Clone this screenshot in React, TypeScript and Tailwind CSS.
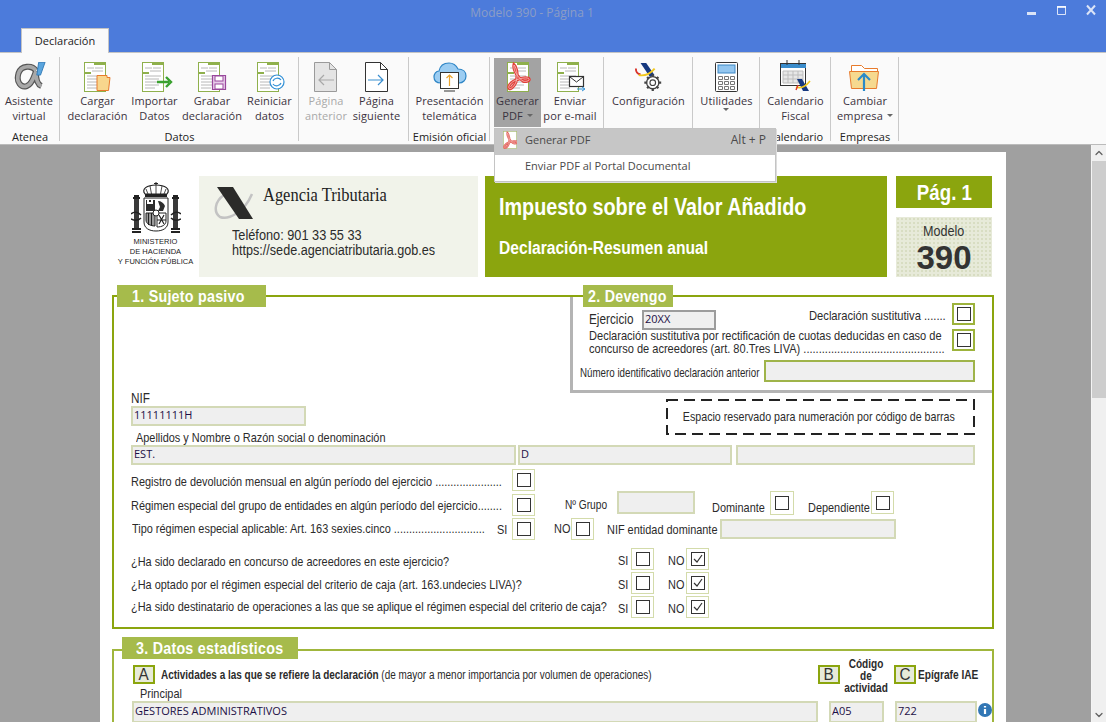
import React from 'react';
import { ChevronDown, ChevronUp } from 'lucide-react';

const ribbonFont = { fontFamily: '"Open Sans", "Noto Sans", sans-serif' };
const formFont = { fontFamily: '"Liberation Sans", Arial, sans-serif' };

// The form is set in a condensed face, so regular text gets squeezed horizontally
const N = ({
  children,
  className = 'origin-left scale-x-[0.84]',
}: {
  children: React.ReactNode;
  className?: string;
}) => <span className={`inline-block whitespace-nowrap ${className}`}>{children}</span>;

// Shared document sheet used by most of the ribbon icons
const Sheet = ({ children, w = 26 }: { children?: React.ReactNode; w?: number }) => (
  <svg width={w} height="30" viewBox={`0 0 ${w} 30`} className="block overflow-visible">
    <rect x="0.5" y="0.5" width="21" height="29" fill="#fff" stroke="#8fb04c" />
    <rect x="10" y="0" width="12" height="3" fill="#8fb04c" />
    <rect x="0" y="10" width="7" height="2" fill="#8fb04c" />
    <path d="M3 6h7M11 6h8M8 9h11M3 14h16M3 17h14M3 20h16M3 23h14M3 26h10" stroke="#b8b8b8" strokeWidth="1" />
    {children}
  </svg>
);

const AlphaIcon = () => (
  <svg width="33" height="28" viewBox="0 0 36 30" className="mb-[2px]">
    <path d="M25 9C21 3 9 3 6 12c-3 10 3 16 9 14 6-2 8-11 10-16 0 8 1 14 6 16" fill="none" stroke="#555" strokeWidth="6.5" />
    <path d="M25 9C21 3 9 3 6 12c-3 10 3 16 9 14 6-2 8-11 10-16 0 8 1 14 6 16" fill="none" stroke="#a8a8a8" strokeWidth="4" />
    <path d="M28 0h7l-5 14h-4z" fill="#5aa5de" stroke="#2f78b5" />
  </svg>
);

const PdfSwoosh = ({ color = '#e2403a' }: { color?: string }) => (
  <>
    <path
      d="M7 3c-1 5 4 13 9 16 2 1 7 0 6-2-1-2-8-1-13 1-5 2-8 6-7 8 1 2 5-1 7-6 2-5 1-14-2-17z"
      fill="none"
      stroke={color}
      strokeWidth="3.2"
    />
    <path
      d="M7 3c-1 5 4 13 9 16 2 1 7 0 6-2-1-2-8-1-13 1-5 2-8 6-7 8 1 2 5-1 7-6 2-5 1-14-2-17z"
      fill="none"
      stroke="#f8c4c0"
      strokeWidth="0.8"
    />
  </>
);

const PaperArrow = ({ disabled }: { disabled?: boolean }) => (
  <svg width="24" height="30" viewBox="0 0 24 30">
    <path
      d="M.5.5h15l7 7v22H.5z"
      fill={disabled ? '#e4e4e4' : '#fff'}
      stroke={disabled ? '#9a9a9a' : '#333'}
    />
    <path d="M15.5.5v7h7" fill="none" stroke={disabled ? '#9a9a9a' : '#333'} />
    {disabled ? (
      <path d="M20 18H5M10 13l-5 5 5 5" fill="none" stroke="#a8a8a8" strokeWidth="1.2" />
    ) : (
      <path d="M3 18h15M13 13l5 5-5 5" fill="none" stroke="#3b8fd0" strokeWidth="1.2" />
    )}
  </svg>
);

const CloudIcon = () => (
  <svg width="34" height="31" viewBox="0 0 34 31">
    <path
      d="M8 22C3 22 1 19 1 16c0-3 2-6 5-6 1-5 5-8 10-8 4 0 7 2 9 6 5 0 8 3 8 7s-3 7-7 7z"
      fill="#9ccdf2"
      stroke="#2f86c6"
      strokeWidth="1.2"
    />
    <rect x="7.5" y="11.5" width="18" height="16" fill="#fff" stroke="#333" />
    <path d="M11 30h11" stroke="#333" />
    <path d="M16.5 25V14M13.5 17l3-3 3 3" fill="none" stroke="#eba52f" strokeWidth="1.2" />
  </svg>
);

const ConfigIcon = () => (
  <svg width="32" height="30" viewBox="0 0 32 32">
    <path d="M7 1h6l9 13-5 2z" fill="#16387f" />
    <path d="M2 7c0 4 2 6 5 6" fill="none" stroke="#d9342b" strokeWidth="2" />
    <path d="M5 14c6 1 12-1 17-7" fill="none" stroke="#f2c81d" strokeWidth="2" />
    <circle cx="20" cy="22" r="6.5" fill="#fff" stroke="#444" strokeWidth="1.4" />
    <circle cx="20" cy="22" r="3" fill="#fff" stroke="#444" strokeWidth="1.2" />
    <path d="M20 13v3M20 28v3M11 22h3M26 22h3M14 16l2 2M24 26l2 2M14 28l2-2M24 18l2-2" stroke="#444" strokeWidth="2.4" />
  </svg>
);

const CalcIcon = () => (
  <svg width="24" height="30" viewBox="0 0 24 30">
    <rect x="0.5" y="0.5" width="22" height="29" rx="1" fill="#fff" stroke="#333" />
    <rect x="3" y="3" width="17" height="8" fill="#93c6ef" stroke="#3c87c4" />
    <path d="M3.5 14.5h4v3h-4zM9.5 14.5h4v3h-4zM15.5 14.5h4v3h-4zM3.5 19.5h4v3h-4zM9.5 19.5h4v3h-4zM15.5 19.5h4v3h-4zM3.5 24.5h4v3h-4zM9.5 24.5h4v3h-4zM15.5 24.5h4v3h-4z" fill="none" stroke="#777" />
  </svg>
);

const CalendarIcon = () => (
  <svg width="32" height="32" viewBox="0 0 32 32">
    <rect x="0.5" y="3.5" width="25" height="22" fill="#fff" stroke="#333" />
    <rect x="1" y="4" width="25" height="4" fill="#3a8ccb" />
    <path d="M7 0v5M19 0v5" stroke="#333" />
    <path d="M3 11h20v12H3zM3 15h20M3 19h20M8 11v12M13 11v12M18 11v12" fill="#e7e7e7" stroke="#bdbdbd" />
    <path d="M17 19h5l7 12h-6z" fill="#16387f" />
    <path d="M16 27c5 2 10-1 14-6" fill="none" stroke="#f2c81d" strokeWidth="1.6" />
    <path d="M18 25l-2 5" stroke="#d9342b" strokeWidth="1.4" />
  </svg>
);

const FolderIcon = () => (
  <svg width="32" height="28" viewBox="0 0 32 28">
    <path d="M2.5 9V1.5h10l3 3h13V9" fill="#fff" stroke="#e87b2c" />
    <path d="M.5 7.5h29l-2 17h-25z" fill="#f6d98f" stroke="#e87b2c" />
    <path d="M15 27V11M9 16l6-6 6 6" fill="none" stroke="#2b8ac8" strokeWidth="2.2" />
  </svg>
);

type RibbonItem = {
  lines: [string, string];
  icon: React.ReactNode;
  width: number;
  arrow?: boolean;
  muted?: boolean;
  active?: boolean;
};

const Caret = () => (
  <span className="inline-block h-0 w-0 border-x-[3px] border-t-[3px] border-x-transparent border-t-[#666] align-middle" />
);

const RibbonButton = ({ item }: { item: RibbonItem }) => (
  <div
    className={`flex h-[69px] shrink-0 flex-col items-center ${item.active ? 'bg-[#a3a3a3]' : ''}`}
    style={{ width: item.width }}
  >
    <div className="flex h-[34px] items-end">{item.icon}</div>
    <div
      className={`mt-[1px] text-center text-[11px] leading-[15px] whitespace-nowrap tracking-[0.1px] ${
        item.muted ? 'text-[#a9a9a9]' : 'text-[#3a3340]'
      }`}
    >
      <div>{item.lines[0]}</div>
      <div className="flex items-center justify-center gap-1">
        {item.lines[1] && <span>{item.lines[1]}</span>}
        {!item.lines[1] && !item.arrow && '\u00a0'}
        {item.arrow && <Caret />}
      </div>
    </div>
  </div>
);

const RibbonGroup = ({
  label,
  width,
  items,
  padLeft = 0,
}: {
  label?: string;
  width: number;
  items: RibbonItem[];
  padLeft?: number;
}) => (
  <div className="relative flex shrink-0 flex-col pt-[5px]" style={{ width }}>
    <div className="flex" style={{ paddingLeft: padLeft }}>
      {items.map((it) => (
        <RibbonButton key={it.lines.join()} item={it} />
      ))}
    </div>
    <div className="mt-[2px] text-center text-[11px] leading-[15px] whitespace-nowrap text-[#222]">{label}</div>
    <span className="absolute top-[4px] right-0 h-[84px] w-[1px] bg-[#c9c9c9]" />
  </div>
);

const Ribbon = () => (
  <div className="flex h-[93px] border-t border-b border-t-[#c4c4c4] border-b-[#bbbbbb] bg-[#fafafa]" style={ribbonFont}>
    <RibbonGroup
      label="Atenea"
      width={60}
      padLeft={3}
      items={[{ lines: ['Asistente', 'virtual'], width: 52, icon: <AlphaIcon /> }]}
    />
    <RibbonGroup
      label="Datos"
      width={239}
      padLeft={9}
      items={[
        {
          lines: ['Cargar', 'declaración'],
          width: 57,
          icon: (
            <Sheet w={28}>
              <path d="M13 13.5h10v2h3l-1.5 13h-11.5z" fill="#f8d68d" stroke="#e87b2c" />
            </Sheet>
          ),
        },
        {
          lines: ['Importar', 'Datos'],
          width: 57,
          icon: (
            <Sheet>
              <path d="M15 20h12M24 15l5 5-5 5" fill="none" stroke="#3aa12f" strokeWidth="2.4" />
            </Sheet>
          ),
        },
        {
          lines: ['Grabar', 'declaración'],
          width: 58,
          icon: (
            <Sheet w={28}>
              <path d="M14.5 13.5h13v14h-13z" fill="#e8cdea" stroke="#99489c" strokeWidth="1.2" />
              <rect x="17" y="14" width="8" height="5" fill="#fff" stroke="#99489c" />
              <rect x="17" y="22" width="8" height="5" fill="#fff" stroke="#99489c" />
            </Sheet>
          ),
        },
        {
          lines: ['Reiniciar', 'datos'],
          width: 57,
          icon: (
            <Sheet>
              <circle cx="20" cy="20" r="7" fill="#fff" stroke="#2f8fd6" strokeWidth="1.2" />
              <path d="M16 19c1-3 6-4 8-1M24 21c-1 3-6 4-8 1" fill="none" stroke="#2f8fd6" strokeWidth="1.2" />
            </Sheet>
          ),
        },
      ]}
    />
    <RibbonGroup
      width={110}
      items={[
        { lines: ['Página', 'anterior'], width: 54, muted: true, icon: <PaperArrow disabled /> },
        { lines: ['Página', 'siguiente'], width: 47, icon: <PaperArrow /> },
      ]}
    />
    <RibbonGroup
      label="Emisión oficial"
      width={81}
      items={[{ lines: ['Presentación', 'telemática'], width: 81, icon: <CloudIcon /> }]}
    />
    <RibbonGroup
      width={114}
      padLeft={4}
      items={[
        {
          lines: ['Generar', 'PDF'],
          width: 47,
          arrow: true,
          active: true,
          icon: (
            <Sheet w={22}>
              <PdfSwoosh />
            </Sheet>
          ),
        },
        {
          lines: ['Enviar', 'por e-mail'],
          width: 58,
          icon: (
            <Sheet>
              <rect x="12.5" y="14.5" width="14" height="10" fill="#fff" stroke="#333" strokeWidth="1.2" />
              <path d="M13 15l6.5 5 6.5-5" fill="none" stroke="#333" />
              <path d="M20 27h7M25 25l3 2-3 2" fill="none" stroke="#2f8fd6" />
            </Sheet>
          ),
        },
      ]}
    />
    <RibbonGroup
      width={89}
      padLeft={1}
      items={[{ lines: ['Configuración', ''], width: 87, icon: <ConfigIcon /> }]}
    />
    <RibbonGroup
      width={67}
      items={[{ lines: ['Utilidades', ''], width: 67, arrow: true, icon: <CalcIcon /> }]}
    />
    <RibbonGroup
      label="Calendario"
      width={71}
      items={[{ lines: ['Calendario', 'Fiscal'], width: 71, icon: <CalendarIcon /> }]}
    />
    <RibbonGroup
      label="Empresas"
      width={68}
      items={[{ lines: ['Cambiar', 'empresa'], width: 68, arrow: true, icon: <FolderIcon /> }]}
    />
  </div>
);

const PdfMenu = () => (
  <div
    className="absolute top-[128px] left-[494px] z-20 w-[282px] border border-[#c4c4c4] bg-white text-[11px] text-[#4a4a4a] shadow-[1px_1px_0_#ddd]"
    style={ribbonFont}
  >
    <div className="flex h-[26px] items-center bg-[#c6c6c6] pr-[9px] pb-[4px]">
      <svg width="14" height="18" viewBox="0 0 22 28" className="ml-[8px]">
        <rect x="0.5" y="0.5" width="21" height="27" fill="#fff" stroke="#a9bf72" />
        <PdfSwoosh color="#e2605a" />
      </svg>
      <span className="ml-[8px]">Generar PDF</span>
      <span className="ml-auto text-[12px]">Alt + P</span>
    </div>
    <div className="flex h-[26px] items-center pb-[4px] pl-[30px]">Enviar PDF al Portal Documental</div>
  </div>
);

const Check = ({
  checked,
  strong,
  size = 'h-[22px] w-[23px]',
}: {
  checked?: boolean;
  strong?: boolean;
  size?: string;
}) => (
  <span
    className={`flex shrink-0 items-center justify-center bg-white ${
      strong ? 'border-2 border-[#9db33c]' : 'border border-[#d3dbaa]'
    } ${size}`}
  >
    <span className="flex h-[14px] w-[14px] items-center justify-center border border-[#333]">
      {checked && (
        <svg width="12" height="12" viewBox="0 0 12 12">
          <path d="M2 6l3 3 5-7" fill="none" stroke="#333" strokeWidth="1.2" />
        </svg>
      )}
    </span>
  </span>
);

const Field = ({ value, className }: { value?: string; className: string }) => (
  <div
    className={`flex shrink-0 items-center border-2 bg-[#efefef] pb-[1px] pl-[1px] text-[11px] text-[#1c0f45] ${className}`}
    style={ribbonFont}
  >
    {value}
  </div>
);

const SectionTab = ({ title, className }: { title: string; className: string }) => (
  <div
    className={`absolute flex h-[22px] items-center bg-[#a6bb4b] text-[17px] leading-none font-bold tracking-[0.3px] text-white ${className}`}
  >
    <N>{title}</N>
  </div>
);

const Crest = () => (
  <svg width="50" height="54" viewBox="0 0 50 54" className="block">
    {/* crown */}
    <path d="M25 0v3M23 1.5h4" stroke="#222" />
    <path d="M14 12c-4-5 2-9 11-9s15 4 11 9z" fill="#fff" stroke="#222" strokeWidth="1.2" />
    <path d="M25 3v9M19 4l1.5 8M31 4l-1.5 8M15 7l2 5M35 7l-2 5" stroke="#222" strokeWidth="0.8" />
    <rect x="14" y="12" width="22" height="3" fill="#222" />
    {/* shield */}
    <path d="M13 16h24v24c0 6-5 9-12 9s-12-3-12-9z" fill="#fff" stroke="#222" />
    <rect x="15" y="18" width="9" height="11" fill="#2d2d2d" />
    <path d="M16 18h2v2h2v-2h2v4h-6z" fill="#fff" />
    <path d="M27 19c3 0 6 2 7 5l-2 5h-5l2-4z" fill="#2d2d2d" />
    <path d="M15 31h9v13c-4 0-9-2-9-6zM17.5 31v12M20.5 31v13" fill="#999" stroke="#222" strokeWidth="1" />
    <path d="M26 31h9v8c0 4-4 6-9 6z" fill="#fff" stroke="#222" strokeWidth="1" />
    <path d="M28 33l5 9M33 33l-5 9M26 38h9" stroke="#222" strokeWidth="1.2" />
    <circle cx="25" cy="31" r="3" fill="#fff" stroke="#222" />
    {/* pillars of Hercules */}
    <rect x="3" y="17" width="5" height="29" fill="#3a3a3a" />
    <rect x="42" y="17" width="5" height="29" fill="#3a3a3a" />
    <path d="M2 16h7M41 16h7M1 47h9M40 47h9M1 50h9M40 50h9" stroke="#222" strokeWidth="2" />
    <path d="M3 13h5v2H3zM42 13h5v2h-5z" fill="#222" />
    <path d="M0 32c3-3 7-2 10 1M0 37c4 2 7 2 10-1M50 32c-3-3-7-2-10 1M50 37c-4 2-7 2-10-1" fill="none" stroke="#222" strokeWidth="1.5" />
  </svg>
);

const AeatLogo = () => (
  <svg width="42" height="36" viewBox="0 0 42 36" className="block shrink-0">
    <path d="M12 11C3 17 1 28 8 33c8 3 24-4 32-23" fill="none" stroke="#c3c3c3" strokeWidth="2.5" />
    <path d="M5 3h16l20 32H27z" fill="#2b2b29" />
  </svg>
);

const Header = () => (
  <div className="flex h-[101px]">
    <div className="flex w-[87px] shrink-0 flex-col items-center pt-[6px]">
      <Crest />
      <div className="mt-[1px] text-center text-[7.5px] leading-[10px] whitespace-nowrap text-[#222]">
        <div>MINISTERIO</div>
        <div>DE HACIENDA</div>
        <div>Y FUNCIÓN PÚBLICA</div>
      </div>
    </div>
    <div className="w-[279px] shrink-0 bg-[#f1f3ea] pt-[8px] pl-[13px]">
      <div className="flex">
        <AeatLogo />
        <span
          className="mt-[-1px] ml-[9px] origin-left scale-x-[0.89] text-[18.5px] leading-[24px] whitespace-nowrap text-[#222]"
          style={{ fontFamily: '"Liberation Serif", serif' }}
        >
          Agencia Tributaria
        </span>
      </div>
      <div className="mt-[8px] ml-[20px] text-[14px] leading-[15px] text-[#2b2b2b]">
        <div>
          <N className="origin-left scale-x-[0.91]">Teléfono: 901 33 55 33</N>
        </div>
        <div>
          <N className="origin-left scale-x-[0.9]">https://sede.agenciatributaria.gob.es</N>
        </div>
      </div>
    </div>
    <div className="ml-[7px] w-[402px] shrink-0 bg-[#8ba50e] pt-[17px] pl-[14px] font-bold text-white">
      <div className="text-[24px] leading-[28px]">
        <N className="origin-left scale-x-[0.825]">Impuesto sobre el Valor Añadido</N>
      </div>
      <div className="mt-[16px] text-[18px] leading-[22px]">
        <N className="origin-left scale-x-[0.867]">Declaración-Resumen anual</N>
      </div>
    </div>
    <div className="ml-[9px] flex w-[96px] shrink-0 flex-col">
      <div className="flex h-[32px] items-center justify-center bg-[#8ba50e] text-[22px] font-bold text-white">
        <N className="origin-center scale-x-[0.85]">Pág. 1</N>
      </div>
      <div className="mt-[9px] flex h-[60px] flex-col items-center bg-[#e7ead9] bg-[radial-gradient(#d8ddc2_1px,transparent_1px)] bg-[length:4px_4px] pt-[5px] text-[#333]">
        <N className="origin-center scale-x-[0.84] text-[15px] leading-[18px]">Modelo</N>
        <span className="mt-[2px] text-[33px] leading-[32px] font-bold">390</span>
      </div>
    </div>
  </div>
);

const Devengo = () => (
  <div className="relative ml-auto h-[96px] w-[422px] border-b-[3px] border-l-[3px] border-[#b4b4b4] bg-white pt-[6px] pr-[17px] text-[13px] text-[#2b2b2b]">
    <SectionTab title="2. Devengo" className="top-[-12px] left-[10px] w-[90px] pl-[5px]" />
    <div className="flex h-[26px] items-start">
      <span className="mt-[7px] ml-[16px] w-[53px] text-[14px] leading-[18px]">
        <N>Ejercicio</N>
      </span>
      <Field value="20XX" className="mt-[7px] h-[20px] w-[74px] border border-[#9c9c9c]" />
      <span className="mt-[4px] ml-auto w-[137px] leading-[18px]">
        <N className="origin-left scale-x-[0.86]">Declaración sustitutiva .......</N>
      </span>
      <span className="ml-[6px]">
        <Check strong />
      </span>
    </div>
    <div className="flex h-[24px] items-start">
      <div className="ml-[16px] w-[340px] text-[13px] leading-[13px]">
        <div>
          <N className="origin-left scale-x-[0.85]">Declaración sustitutiva por rectificación de cuotas deducidas en caso de</N>
        </div>
        <div>
          <N className="origin-left scale-x-[0.85]">concurso de acreedores (art. 80.Tres LIVA) ..............................................</N>
        </div>
      </div>
      <span className="ml-auto">
        <Check strong />
      </span>
    </div>
    <div className="mt-[7px] flex h-[22px] items-center">
      <span className="mt-[4px] ml-[7px] w-[184px] shrink-0">
        <N className="origin-left scale-x-[0.75]">Número identificativo declaración anterior</N>
      </span>
      <Field className="h-[22px] grow border-[#9fb44a]" />
    </div>
  </div>
);

const BarcodeBox = () => (
  <div className="relative mt-[6px] ml-[360px] flex h-[36px] w-[309px] items-center justify-center pr-[3px] text-[13px]">
    <svg width="309" height="36" className="absolute inset-0">
      <rect x="1" y="1" width="307" height="34" fill="none" stroke="#222" strokeWidth="2" strokeDasharray="11 6" />
    </svg>
    <N className="origin-center scale-x-[0.82]">Espacio reservado para numeración por código de barras</N>
  </div>
);

const Sujeto = () => {
  const softField = 'border-[#d3d9b6]';
  const questions = [
    { text: '¿Ha sido declarado en concurso de acreedores en este ejercicio?', offset: 'mt-[6px]' },
    { text: '¿Ha optado por el régimen especial del criterio de caja (art. 163.undecies LIVA)?', offset: 'mt-[4px]' },
    {
      text: '¿Ha sido destinatario de operaciones a las que se aplique el régimen especial del criterio de caja?',
      offset: 'mt-0',
    },
  ];

  return (
    <section className="relative mt-[18px] h-[334px] border-2 border-[#8ba50e] text-[13px] text-[#2b2b2b]">
      <SectionTab title="1. Sujeto pasivo" className="top-[-12px] left-[3px] w-[149px] pl-[15px]" />
      <Devengo />
      <div className="flex h-[52px]">
        <div className="ml-[17px] w-[175px] shrink-0">
          <div className="mt-[-2px] h-[15px] text-[14px] leading-[14px]">
            <N>NIF</N>
          </div>
          <Field value="11111111H" className={`h-[20px] w-[175px] ${softField}`} />
          <div className="mt-[4px] ml-[5px] leading-[15px]">
            <N>Apellidos y Nombre o Razón social o denominación</N>
          </div>
        </div>
        <BarcodeBox />
      </div>
      <div className="ml-[17px] flex h-[20px] gap-[2px]">
        <Field value="EST." className={`h-[20px] w-[385px] ${softField}`} />
        <Field value="D" className={`h-[20px] w-[214px] ${softField}`} />
        <Field className={`ml-[2px] h-[20px] w-[239px] ${softField}`} />
      </div>

      <div className="mt-[4px] ml-[17px] flex h-[22px] items-center">
        <span className="mt-[4px] w-[381px]">
          <N>Registro de devolución mensual en algún período del ejercicio ......................</N>
        </span>
        <Check />
      </div>
      <div className="ml-[17px] flex h-[27px] items-start">
        <span className="mt-[5px] w-[381px]">
          <N>Régimen especial del grupo de entidades en algún período del ejercicio........</N>
        </span>
        <span className="mt-[3px]">
          <Check />
        </span>
        <span className="mt-[4px] ml-[30px] w-[52px]">
          <N className="origin-left scale-x-[0.78]">Nº Grupo</N>
        </span>
        <Field className={`h-[23px] w-[78px] ${softField}`} />
        <span className="mt-[7px] ml-[17px] w-[58px]">
          <N>Dominante</N>
        </span>
        <Check size="h-[24px] w-[24px]" />
        <span className="mt-[7px] ml-[14px] w-[63px]">
          <N>Dependiente</N>
        </span>
        <Check size="h-[23px] w-[23px]" />
      </div>
      <div className="ml-[17px] flex h-[22px] items-center">
        <span className="ml-[1px] w-[365px]">
          <N>Tipo régimen especial aplicable: Art. 163 sexies.cinco ..............................</N>
        </span>
        <span className="mt-[2px] w-[15px]">
          <N>SI</N>
        </span>
        <Check />
        <span className="ml-[19px] w-[17px]">
          <N>NO</N>
        </span>
        <Check />
        <span className="mt-[2px] ml-[13px] w-[113px]">
          <N>NIF entidad dominante</N>
        </span>
        <Field className={`h-[20px] w-[176px] ${softField}`} />
      </div>

      <div className="mt-[8px] ml-[17px] flex flex-col gap-[2px]">
        {questions.map((q) => (
          <div key={q.text} className="flex h-[22px] items-center">
            <span className={`w-[487px] ${q.offset}`}>
              <N>{q.text}</N>
            </span>
            <span className="mt-[3px] w-[13px]">
              <N>SI</N>
            </span>
            <Check />
            <span className="mt-[3px] ml-[14px] w-[18px]">
              <N>NO</N>
            </span>
            <Check checked />
          </div>
        ))}
      </div>
    </section>
  );
};

const LetterBox = ({ letter }: { letter: string }) => (
  <span className="flex h-[19px] w-[22px] shrink-0 items-center justify-center border-2 border-[#8ba50e] bg-[#e7ead9] text-[17px] leading-none text-[#333]">
    <N className="origin-center scale-x-[0.9]">{letter}</N>
  </span>
);

const Estadisticos = () => (
  <section className="relative mt-[20px] h-[120px] border-2 border-b-0 border-[#a0b63c] pt-[13px] text-[#2b2b2b]">
    <SectionTab title="3. Datos estadísticos" className="top-[-14px] left-[8px] w-[176px] pl-[14px]" />
    <div className="ml-[19px] flex h-[21px] items-center">
      <LetterBox letter="A" />
      <span className="ml-[6px] w-[657px] shrink-0 text-[12px]">
        <N className="origin-left scale-x-[0.83]">
          <b>Actividades a las que se refiere la declaración</b> (de mayor a menor importancia por volumen de operaciones)
        </N>
      </span>
      <LetterBox letter="B" />
      <span className="mt-[2px] w-[54px] shrink-0 pr-[6px] text-center text-[12px] leading-[12px] font-bold">
        <N className="origin-center scale-x-[0.84]">
          Código
          <br />
          de
          <br />
          actividad
        </N>
      </span>
      <LetterBox letter="C" />
      <span className="ml-[2px] text-[13px] font-bold">
        <N className="origin-left scale-x-[0.78]">Epígrafe IAE</N>
      </span>
    </div>
    <div className="mt-[1px] ml-[26px] h-[15px] text-[13px] leading-[15px]">
      <N>Principal</N>
    </div>
    <div className="ml-[18px] flex items-start">
      <Field value="GESTORES ADMINISTRATIVOS" className="h-[22px] w-[686px] border-[#d3d9b6]" />
      <Field value="A05" className="ml-[11px] h-[22px] w-[55px] border-[#d3d9b6]" />
      <Field value="722" className="ml-[11px] h-[22px] w-[82px] border-[#d3d9b6]" />
      <svg width="14" height="14" viewBox="0 0 14 14" className="mt-[2px] ml-[1px]">
        <circle cx="7" cy="7" r="7" fill="#3277b5" />
        <path d="M7 3v1.5M7 6v5" stroke="#fff" strokeWidth="2.2" />
      </svg>
    </div>
  </section>
);

export default function App() {
  return (
    <div className="relative h-[722px] w-[1106px] overflow-hidden">
      {/* Title bar */}
      <div className="relative h-[52px] bg-[#4c7bdb]" style={ribbonFont}>
        <div className="pt-[5px] pr-[42px] text-center text-[12px] leading-[16px] text-[#8b9dc6]">Modelo 390 - Página 1</div>
        <div className="absolute top-[28px] left-[21px] flex h-[25px] w-[88px] items-center justify-center border-x border-t border-[#c4c4c4] bg-[#fafafa] text-[11px] text-[#222]">
          Declaración
        </div>
        <svg width="71" height="14" viewBox="0 0 71 14" className="absolute top-[4px] right-[9px]">
          <path d="M1 9.5h9" stroke="#fff" strokeWidth="3" opacity="0.8" />
          <path d="M31.5 2.5h8v8h-8z" fill="none" stroke="#fff" opacity="0.8" />
          <path d="M31 3h9" stroke="#fff" strokeWidth="2" opacity="0.8" />
          <path d="M61 1.5l8 9M69 1.5l-8 9" stroke="#fff" strokeWidth="2" opacity="0.8" />
        </svg>
      </div>
      <Ribbon />
      <PdfMenu />

      {/* Document viewer */}
      <div className="flex h-[577px] bg-[#a0a0a0]" style={formFont}>
        <div className="flex-1 overflow-hidden pt-[7px] pl-[100px]">
          <div className="h-[640px] w-[906px] bg-white pt-[24px] pl-[12px]">
            <div className="w-[882px]">
              <Header />
              <Sujeto />
              <Estadisticos />
            </div>
          </div>
        </div>
        <div className="flex w-[15px] shrink-0 flex-col items-center border-l border-[#f4f4f4] bg-[#f0f0f0]">
          <div className="flex h-[16px] items-center">
            <ChevronUp size={12} strokeWidth={2.5} className="text-[#606060]" />
          </div>
          <div className="h-[237px] w-full bg-[#cdcdcd]" />
          <ChevronDown size={12} strokeWidth={2.5} className="mt-auto mb-[1px] text-[#606060]" />
        </div>
      </div>
    </div>
  );
}
